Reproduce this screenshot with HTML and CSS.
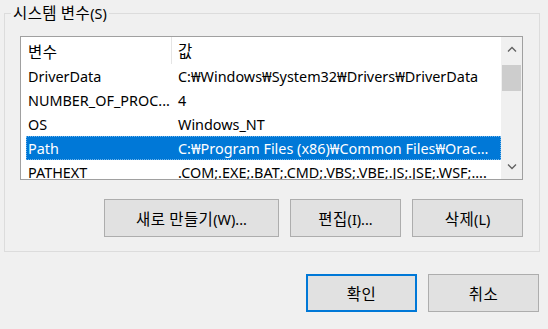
FILE: index.html
```html
<!DOCTYPE html>
<html>
	<head>
		<meta charset="UTF-8">
		<title>환경 변수</title>
		<link rel="stylesheet" href="styles.css">
	</head>
	<body>
		<div class="dialog">
			<!--system vars-->
			<fieldset class="group">
				<legend><span class="ko">시스템 변수</span>(S)</legend>
				<div class="listbox">
					<div class="list">
						<div class="list-head">
							<div class="col col-name"><span class="ko">변수</span></div>
							<div class="col col-value"><span class="ko">값</span></div>
						</div>
						<div class="row">
							<div class="col col-name">DriverData</div>
							<div class="col col-value">C:₩Windows₩System32₩Drivers₩DriverData</div>
						</div>
						<div class="row">
							<div class="col col-name">NUMBER_OF_PROC...</div>
							<div class="col col-value">4</div>
						</div>
						<div class="row">
							<div class="col col-name">OS</div>
							<div class="col col-value">Windows_NT</div>
						</div>
						<div class="row selected">
							<div class="col col-name">Path</div>
							<div class="col col-value">C:₩Program Files (x86)₩Common Files₩Orac...</div>
						</div>
						<div class="row">
							<div class="col col-name">PATHEXT</div>
							<div class="col col-value">.COM;.EXE;.BAT;.CMD;.VBS;.VBE;.JS;.JSE;.WSF;....</div>
						</div>
					</div>
					<!--scrollbar-->
					<div class="scrollbar">
						<div class="arrow">
							<svg width="10" height="6" viewBox="0 0 10 6"><path d="M1 5.5 L5 1.5 L9 5.5" fill="none" stroke="#606060" stroke-width="1.3"/></svg>
						</div>
						<div class="track">
							<div class="thumb"></div>
						</div>
						<div class="arrow">
							<svg width="10" height="6" viewBox="0 0 10 6"><path d="M1 0.5 L5 4.5 L9 0.5" fill="none" stroke="#606060" stroke-width="1.3"/></svg>
						</div>
					</div>
				</div>
				<div class="actions">
					<div class="btn btn-wide"><span class="ko">새로 만들기</span>(W)...</div>
					<div class="btn"><span class="ko">편집</span>(I)...</div>
					<div class="btn"><span class="ko">삭제</span>(L)</div>
				</div>
			</fieldset>
			<!--foot-->
			<div class="foot">
				<div class="btn btn-default"><span class="ko">확인</span></div>
				<div class="btn"><span class="ko">취소</span></div>
			</div>
		</div>
	</body>
</html>
```

FILE: styles.css
```css
body,div,fieldset,legend{
	margin: 0px;
	padding: 0px;
}
body{
	background-color: #f0f0f0;
	font-family: "Segoe UI", "Noto Sans", "Noto Sans CJK KR", sans-serif;
	font-size: 14.4px;
	color: #000;
}
.ko{
	font-family: "Noto Sans CJK KR", sans-serif;
	font-size: 15.5px;
	letter-spacing: 0.4px;
}
.dialog{
	padding: 0 8px 0 4px;
}
/*group start*/
.group{
	margin-top: 1px;
	padding: 11px 16px 14px 15px;
	border: 1px solid #dcdcdc;
}
.group legend{
	margin-left: -9px;
	padding: 0 2px;
	line-height: 22px;
}
/*list*/
.listbox{
	height: 142px;
	border: 1px solid #a0a0a0;
	background-color: #fff;
	display: flex;
	overflow: hidden;
}
.list{
	flex: 1;
	overflow: hidden;
}
.list-head{
	height: 27px;
	display: flex;
	align-items: center;
}
.list-head .col-name{
	width: 143px;
	padding-left: 7px;
	border-right: 1px solid #e5e5e5;
	height: 27px;
	line-height: 29px;
}
.list-head .col-value{
	padding-left: 6px;
	line-height: 29px;
}
.row{
	margin-left: 5px;
	height: 24px;
	line-height: 25px;
	display: flex;
	white-space: nowrap;
}
.row .col-name{
	width: 143px;
	padding-left: 2px;
	overflow: hidden;
}
.row .col-value{
	flex: 1;
	padding-left: 7px;
	overflow: hidden;
}
.row.selected{
	background-color: #0078d7;
	color: #fff;
	outline: 1px dotted rgba(255, 255, 255, 0.45);
	outline-offset: -1px;
}
/*scrollbar*/
.scrollbar{
	width: 21px;
	background-color: #f0f0f0;
	display: flex;
	flex-direction: column;
}
.scrollbar .arrow{
	height: 24px;
	display: flex;
	align-items: center;
	justify-content: center;
}
.scrollbar .track{
	flex: 1;
	padding: 4px 1px 0 1px;
}
.scrollbar .thumb{
	height: 26px;
	background-color: #cdcdcd;
}
/*buttons*/
.actions{
	margin-top: 19px;
	display: flex;
	justify-content: flex-end;
	gap: 11px;
}
.btn{
	width: 109px;
	height: 36px;
	line-height: 36px;
	text-align: center;
	background-color: #e1e1e1;
	border: 1px solid #adadad;
}
.btn-wide{
	width: 173px;
}
.btn-default{
	width: 107px;
	height: 34px;
	line-height: 34px;
	border: 2px solid #0078d7;
}
/*foot*/
.foot{
	margin-top: 22px;
	padding-right: 1px;
	display: flex;
	justify-content: flex-end;
	gap: 11px;
}
```
